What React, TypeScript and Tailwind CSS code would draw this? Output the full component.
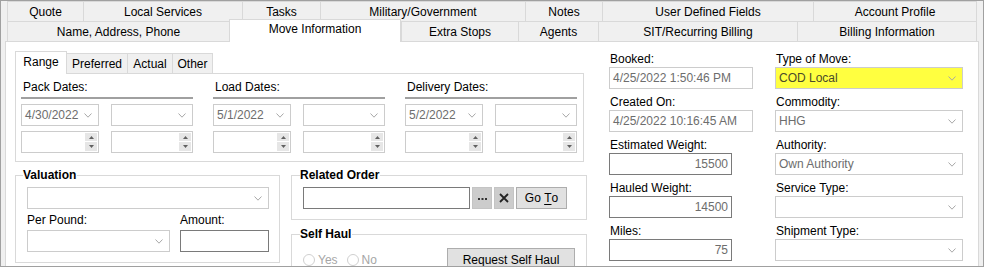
import React from "react";

const Chevron = () => (
  <svg width="8" height="5" viewBox="0 0 8 5" className="shrink-0">
    <polyline points="0.5,0.5 4,4.2 7.5,0.5" fill="none" stroke="#a8a8a8" strokeWidth="1" />
  </svg>
);

function Combo({
  className = "",
  text = "",
  bg = "bg-white",
  textColor = "text-[#6d6d6d]",
}: {
  className?: string;
  text?: string;
  bg?: string;
  textColor?: string;
}) {
  return (
    <div
      className={`flex h-[22px] items-center justify-between border border-[#cccccc] pl-[3px] pr-[6px] ${bg} ${className}`}
    >
      <span className={`whitespace-nowrap ${textColor}`}>{text}</span>
      <Chevron />
    </div>
  );
}

function Spin({ className = "" }: { className?: string }) {
  return (
    <div className={`flex h-[22px] justify-end border border-[#cccccc] bg-white pr-[1px] pt-[1px] ${className}`}>
      <div className="flex flex-col">
        <div className="flex h-[9px] w-[12px] items-center justify-center border-b border-white bg-[#e6e6e6]">
          <svg width="5" height="3" viewBox="0 0 5 3">
            <polygon points="0,3 2.5,0 5,3" fill="#606060" />
          </svg>
        </div>
        <div className="flex h-[9px] w-[12px] items-center justify-center bg-[#e6e6e6]">
          <svg width="5" height="3" viewBox="0 0 5 3">
            <polygon points="0,0 5,0 2.5,3" fill="#606060" />
          </svg>
        </div>
      </div>
    </div>
  );
}

function DateGroup({ label, value = "" }: { label: string; value?: string }) {
  return (
    <div className="w-[172px]">
      <div className="pl-[2px]">{label}</div>
      <div className="mt-[3px] h-[2px] bg-[#a0a0a0]" />
      <div className="mt-[5px] flex gap-[12px]">
        <Combo className="w-[78px]" text={value} />
        <Combo className="w-[82px]" />
      </div>
      <div className="mt-[5px] flex gap-[12px]">
        <Spin className="w-[78px]" />
        <Spin className="w-[82px]" />
      </div>
    </div>
  );
}

function Field({ label, first = false, children }: { label: string; first?: boolean; children: React.ReactNode }) {
  return (
    <div className={first ? "" : "mt-[6px]"}>
      <div className="pl-[1px] whitespace-nowrap">{label}</div>
      <div className="mt-[1px]">{children}</div>
    </div>
  );
}

function ReadBox({ text }: { text: string }) {
  return (
    <div className="flex h-[22px] w-[144px] items-center border border-[#cccccc] pl-[3px] text-[#6d6d6d] whitespace-nowrap">
      {text}
    </div>
  );
}

function NumBox({ text }: { text: string }) {
  return (
    <div className="flex h-[22px] w-[123px] items-center justify-end border border-[#7a7a7a] bg-white pr-[3px] text-[#6d6d6d]">
      {text}
    </div>
  );
}

function Radio({ label }: { label: string }) {
  return (
    <div className="flex items-center gap-[3px] text-[#a6a6a6]">
      <span className="block h-[12px] w-[12px] rounded-full border border-[#cfcfcf] bg-white" />
      <span>{label}</span>
    </div>
  );
}

export default function App() {
  const row1 = [
    { t: "Quote", w: "w-[76px]" },
    { t: "Local Services", w: "w-[159px]" },
    { t: "Tasks", w: "w-[78px]" },
    { t: "Military/Government", w: "w-[205px]" },
    { t: "Notes", w: "w-[77px]" },
    { t: "User Defined Fields", w: "w-[211px]" },
    { t: "Account Profile", w: "w-[164px]" },
  ];
  const row2 = [
    { t: "Name, Address, Phone", w: "w-[222px]" },
    { t: "Move Information", w: "w-[172px]", sel: true },
    { t: "Extra Stops", w: "w-[117px]" },
    { t: "Agents", w: "w-[80px]" },
    { t: "SIT/Recurring Billing", w: "w-[199px]" },
    { t: "Billing Information", w: "w-[180px]" },
  ];

  return (
    <div className="h-[267px] w-[984px] overflow-hidden border border-[#a0a0a0] bg-[#f0f0f0] font-['Liberation_Sans',Arial,sans-serif] text-[12px] leading-[14px] text-black">
      {/* tab row 1 */}
      <div className="flex h-[20px] pl-[6px]">
        {row1.map((t, i) => (
          <div
            key={t.t}
            className={`flex h-[20px] items-center justify-center border-l border-t border-[#d9d9d9] bg-[#f0f0f0] whitespace-nowrap ${t.w} ${
              i === row1.length - 1 ? "border-r" : ""
            }`}
          >
            {t.t}
          </div>
        ))}
      </div>
      {/* tab row 2 */}
      <div className="relative z-10 flex h-[20px] pl-[6px]">
        {row2.map((t, i) =>
          t.sel ? (
            <div
              key={t.t}
              className={`-mt-[2px] flex h-[23px] items-start justify-center border-l border-r border-t border-[#d9d9d9] bg-white pt-[2px] whitespace-nowrap ${t.w}`}
            >
              {t.t}
            </div>
          ) : (
            <div
              key={t.t}
              className={`flex h-[20px] items-center justify-center border-l border-t border-[#d9d9d9] bg-[#f0f0f0] whitespace-nowrap ${t.w} ${
                i === row2.length - 1 ? "border-r" : ""
              }`}
            >
              {t.t}
            </div>
          )
        )}
      </div>

      {/* main panel */}
      <div className="ml-[4px] flex h-[240px] w-[974px] border border-[#d9d9d9] bg-white">
        {/* left column */}
        <div className="ml-[9px] mt-[9px] w-[572px]">
          {/* inner tabs */}
          <div className="relative z-10 flex h-[22px] items-start">
            <div className="flex h-[23px] w-[52px] justify-center border-l border-r border-t border-[#d9d9d9] bg-white pt-[3px]">
              Range
            </div>
            <div className="mt-[2px] flex h-[20px] w-[61px] justify-center border-r border-t border-[#d9d9d9] bg-[#f0f0f0] pt-[3px]">
              Preferred
            </div>
            <div className="mt-[2px] flex h-[20px] w-[45px] justify-center border-r border-t border-[#d9d9d9] bg-[#f0f0f0] pt-[3px]">
              Actual
            </div>
            <div className="mt-[2px] flex h-[20px] w-[40px] justify-center border-r border-t border-[#d9d9d9] bg-[#f0f0f0] pt-[3px]">
              Other
            </div>
          </div>
          {/* range panel */}
          <div className="flex h-[89px] w-[569px] gap-[20px] border border-[#d9d9d9] pl-[5px] pt-[6px]">
            <DateGroup label="Pack Dates:" value="4/30/2022" />
            <DateGroup label="Load Dates:" value="5/1/2022" />
            <DateGroup label="Delivery Dates:" value="5/2/2022" />
          </div>

          <div className="mt-[6px] flex">
            {/* Valuation */}
            <fieldset className="h-[95px] w-[265px] border border-[#d9d9d9]">
              <legend className="ml-[7px] pr-[1px] font-bold">Valuation</legend>
              <div className="pl-[11px] pr-[9px] pt-[5px]">
                <Combo className="w-[242px]" />
                <div className="mt-[4px] flex">
                  <div className="w-[143px]">
                    <div>Per Pound:</div>
                    <Combo className="mt-[3px] w-[143px]" />
                  </div>
                  <div className="ml-[10px] w-[89px]">
                    <div>Amount:</div>
                    <div className="mt-[3px] h-[22px] w-[89px] border border-[#7a7a7a] bg-white" />
                  </div>
                </div>
              </div>
            </fieldset>

            <div className="ml-[11px] w-[296px]">
              {/* Related Order */}
              <fieldset className="h-[52px] w-[296px] border border-[#d9d9d9]">
                <legend className="ml-[8px] pr-[1px] font-bold">Related Order</legend>
                <div className="flex items-center pl-[11px] pt-[5px]">
                  <div className="h-[22px] w-[167px] border border-[#7a7a7a] bg-white" />
                  <div className="ml-[2px] flex h-[22px] w-[20px] items-end justify-center border border-[#c4c4c4] bg-[#cccccc] pb-[8px]">
                    <svg width="9" height="2" viewBox="0 0 9 2">
                      <rect x="0" y="0" width="2" height="2" fill="#333" />
                      <rect x="3.5" y="0" width="2" height="2" fill="#333" />
                      <rect x="7" y="0" width="2" height="2" fill="#333" />
                    </svg>
                  </div>
                  <div className="ml-[2px] flex h-[22px] w-[20px] items-center justify-center border border-[#c4c4c4] bg-[#cccccc]">
                    <svg width="10" height="10" viewBox="0 0 10 10">
                      <path d="M1 1 L9 9 M9 1 L1 9" stroke="#222" strokeWidth="1.8" />
                    </svg>
                  </div>
                  <div className="ml-[2px] flex h-[22px] w-[51px] items-center justify-center border border-[#adadad] bg-[#e1e1e1]">
                    Go&nbsp;<span className="underline underline-offset-[2px]">T</span>o
                  </div>
                </div>
              </fieldset>

              {/* Self Haul */}
              <fieldset className="mt-[7px] h-[60px] w-[296px] border border-[#d9d9d9]">
                <legend className="ml-[8px] pr-[1px] font-bold">Self Haul</legend>
                <div className="flex items-start pl-[11px] pt-[7px]">
                  <div className="mt-[5px] flex gap-[9px]">
                    <Radio label="Yes" />
                    <Radio label="No" />
                  </div>
                  <div className="ml-auto mr-[11px] flex h-[23px] w-[128px] items-center justify-center border border-[#adadad] bg-[#e1e1e1]">
                    Req<span className="underline underline-offset-[2px]">u</span>est Self Haul
                  </div>
                </div>
              </fieldset>
            </div>
          </div>
        </div>

        {/* middle fields column */}
        <div className="ml-[22px] mt-[10px] w-[144px]">
          <Field label="Booked:" first>
            <ReadBox text="4/25/2022 1:50:46 PM" />
          </Field>
          <Field label="Created On:">
            <ReadBox text="4/25/2022 10:16:45 AM" />
          </Field>
          <Field label="Estimated Weight:">
            <NumBox text="15500" />
          </Field>
          <Field label="Hauled Weight:">
            <NumBox text="14500" />
          </Field>
          <Field label="Miles:">
            <NumBox text="75" />
          </Field>
        </div>

        {/* right fields column */}
        <div className="ml-[22px] mt-[10px] w-[188px]">
          <Field label="Type of Move:" first>
            <Combo className="w-[188px]" text="COD Local" bg="bg-[#ffff40]" textColor="text-[#4a4a2a]" />
          </Field>
          <Field label="Commodity:">
            <Combo className="w-[188px]" text="HHG" />
          </Field>
          <Field label="Authority:">
            <Combo className="w-[188px]" text="Own Authority" />
          </Field>
          <Field label="Service Type:">
            <Combo className="w-[188px]" />
          </Field>
          <Field label="Shipment Type:">
            <Combo className="w-[188px]" />
          </Field>
        </div>
      </div>
    </div>
  );
}
